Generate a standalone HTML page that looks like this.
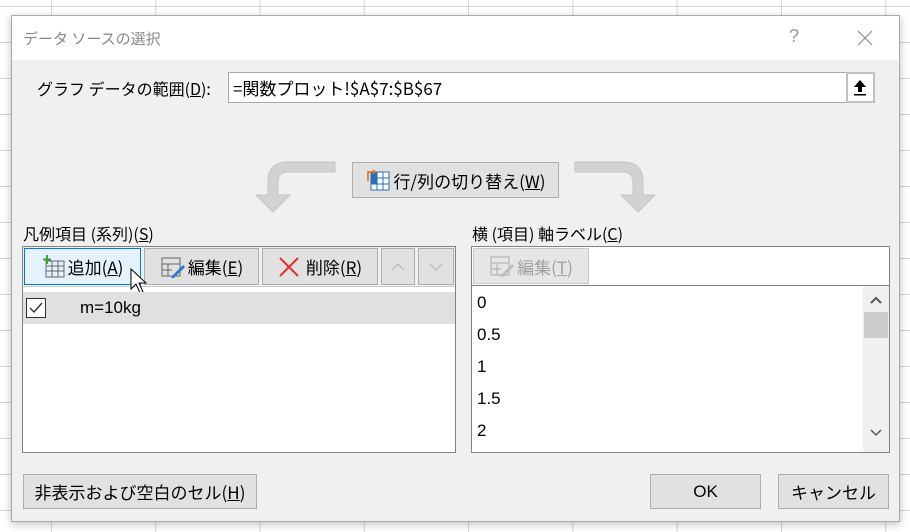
<!DOCTYPE html>
<html><head><meta charset="utf-8"><style>
*{margin:0;padding:0;box-sizing:border-box}
body{width:910px;height:532px;overflow:hidden;position:relative;background:#fff;
background-image:linear-gradient(90deg,transparent 51px,#d4d4d4 51px,#d4d4d4 52px,transparent 52px),linear-gradient(0deg,transparent 35px,#d4d4d4 35px);
background-size:104.3px 100%,100% 36px;background-position:0 0,0 6px;
font-family:"Liberation Sans","Noto Sans CJK JP",sans-serif;color:#000;font-size:16px}
.a{position:absolute}
.dlg{left:11px;top:15px;width:889px;height:507px;background:#f0f0f0;border:1px solid #aaa;box-shadow:0 2px 8px rgba(0,0,0,.25)}
.tb{left:12px;top:16px;width:887px;height:44px;background:#fff}
.btn{position:absolute;background:#e1e1e1;border:1px solid #adadad;display:flex;align-items:center;justify-content:center;white-space:nowrap}
.jp{font-family:"Noto Sans CJK JP",sans-serif}
u{text-decoration:underline}
</style></head><body>
<div class="a dlg"></div>
<div class="a tb"></div>
<div class="a jp" style="left:23px;top:28px;font-size:15px;color:#888">データ ソースの選択</div>
<div class="a" style="left:789px;top:26px;font-size:18px;color:#999">?</div>
<svg class="a" style="left:857px;top:30px" width="16" height="16"><path d="M1 1L15 15M15 1L1 15" stroke="#888" stroke-width="1.2"/></svg>

<div class="a jp" style="left:37px;top:76px;font-size:16px">グラフ データの範囲(<u>D</u>):</div>
<div class="a" style="left:228px;top:72px;width:620px;height:31px;background:#fff;border:1px solid #aaa"></div>
<div class="a jp" style="left:233px;top:75px;font-size:17px">=関数プロット!$A$7:$B$67</div>
<div class="a" style="left:846px;top:72px;width:29px;height:31px;background:#fff;border:2px solid #c0c0c0"></div>
<svg class="a" style="left:852px;top:79px" width="16" height="18"><path d="M8 1L2 8H6V13H10V8H14Z" fill="#000"/><rect x="2" y="15" width="12" height="1.5" fill="#000"/></svg>

<svg class="a" style="left:248px;top:160px" width="90" height="55"><path d="M87 2H40Q20 2 20 22V35H8L25 52L42 35H30V22Q30 12 40 12H87Z" fill="#d2d2d2" stroke="#c4c4c4"/></svg>
<svg class="a" style="left:573px;top:160px" width="90" height="55"><path d="M2 2H50Q70 2 70 22V35H82L65 52L48 35H60V22Q60 12 50 12H2Z" fill="#d2d2d2" stroke="#c4c4c4"/></svg>
<div class="btn jp" style="left:352px;top:162px;width:207px;height:36px;font-size:17px">
<svg width="26" height="24" style="margin-right:2px"><rect x="6" y="4" width="18" height="18" fill="#fff" stroke="#2a6fb5"/><path d="M6 10H24M6 16H24M12 4V22M18 4V22" stroke="#2a6fb5"/><rect x="6" y="4" width="6" height="6" fill="#2a6fb5"/><rect x="6" y="10" width="6" height="6" fill="#2a6fb5"/><path d="M3 13V4H10M8 2L10 4L8 6" stroke="#d07020" stroke-width="1.5" fill="none"/></svg>行/列の切り替え(<u>W</u>)</div>

<div class="a jp" style="left:23px;top:221px;font-size:16px">凡例項目 (系列)(<u>S</u>)</div>
<div class="a" style="left:22px;top:246px;width:434px;height:207px;background:#fff;border:1px solid #828282"></div>
<div class="a" style="left:23px;top:247px;width:432px;height:40px;background:#f0f0f0;border-bottom:1px solid #ccc"></div>
<div class="btn jp" style="left:24px;top:248px;width:117px;height:37px;background:#e5f1fb;border-color:#0078d7;font-size:17px">
<svg width="24" height="24" style="margin-right:2px"><rect x="4" y="6" width="18" height="16" fill="none" stroke="#666"/><path d="M4 11H22M4 16H22M10 6V22M16 6V22" stroke="#666"/><path d="M5 0V9M1 4.5H9" stroke="#3aa03a" stroke-width="2"/></svg>追加(<u>A</u>)</div>
<div class="btn jp" style="left:144px;top:248px;width:115px;height:37px;font-size:17px">
<svg width="26" height="24" style="margin-right:2px"><rect x="2" y="3" width="18" height="18" fill="none" stroke="#666"/><path d="M2 9H20M2 15H12M8 9V21" stroke="#666"/><path d="M12 21L23 10L25 12L14 23L11 23Z" fill="#2a7bd0"/></svg>編集(<u>E</u>)</div>
<div class="btn jp" style="left:262px;top:248px;width:116px;height:37px;font-size:17px">
<svg width="22" height="20" style="margin-right:6px"><path d="M2 1L20 19M20 1L2 19" stroke="#e03030" stroke-width="2"/></svg>削除(<u>R</u>)</div>
<div class="btn" style="left:381px;top:248px;width:34px;height:37px"><svg width="14" height="10"><path d="M1 8L7 2L13 8" stroke="#bbb" fill="none" stroke-width="1.3"/></svg></div>
<div class="btn" style="left:418px;top:248px;width:36px;height:37px"><svg width="14" height="10"><path d="M1 2L7 8L13 2" stroke="#bbb" fill="none" stroke-width="1.3"/></svg></div>
<svg class="a" style="left:130px;top:268px" width="20" height="30"><path d="M1 1V21L6 16L10 25L13 24L9 15H16Z" fill="#fff" stroke="#000" stroke-width="1"/></svg>
<div class="a" style="left:23px;top:292px;width:432px;height:32px;background:#e0e0e0"></div>
<div class="a" style="left:26px;top:298px;width:20px;height:20px;border:1px solid #333;background:#fff"></div>
<svg class="a" style="left:29px;top:302px" width="14" height="12"><path d="M1 6L5 10L13 1" stroke="#333" fill="none" stroke-width="1.4"/></svg>
<div class="a" style="left:80px;top:298px;font-size:17px">m=10kg</div>

<div class="a jp" style="left:472px;top:221px;font-size:16px">横 (項目) 軸ラベル(<u>C</u>)</div>
<div class="a" style="left:471px;top:246px;width:419px;height:207px;background:#fff;border:1px solid #828282"></div>
<div class="a" style="left:472px;top:285px;width:417px;height:1px;background:#828282"></div>
<div class="btn jp" style="left:473px;top:248px;width:116px;height:36px;color:#a0a0a0;font-size:17px;border-color:#c8c8c8;background:#e6e6e6">
<svg width="26" height="24" style="margin-right:2px"><rect x="2" y="3" width="18" height="18" fill="none" stroke="#aaa"/><path d="M2 9H20M2 15H12M8 9V21" stroke="#aaa"/><path d="M12 21L23 10L25 12L14 23L11 23Z" fill="#bbb"/></svg>編集(<u>T</u>)</div>
<div class="a" style="left:477px;top:287px;font-size:17px;line-height:32px">0<br>0.5<br>1<br>1.5<br>2</div>
<div class="a" style="left:863px;top:286px;width:26px;height:166px;background:#f0f0f0"></div>
<div class="a" style="left:864px;top:312px;width:24px;height:26px;background:#cdcdcd"></div>
<svg class="a" style="left:869px;top:296px" width="14" height="10"><path d="M2 7L7 2L12 7" stroke="#555" fill="none" stroke-width="2"/></svg>
<svg class="a" style="left:869px;top:428px" width="14" height="10"><path d="M2 2L7 7L12 2" stroke="#555" fill="none" stroke-width="1.5"/></svg>

<div class="btn jp" style="left:23px;top:474px;width:234px;height:35px;font-size:17px">非表示および空白のセル(<u>H</u>)</div>
<div class="btn" style="left:650px;top:474px;width:111px;height:35px;font-size:17px">OK</div>
<div class="btn jp" style="left:778px;top:474px;width:111px;height:35px;font-size:17px">キャンセル</div>
</body></html>
